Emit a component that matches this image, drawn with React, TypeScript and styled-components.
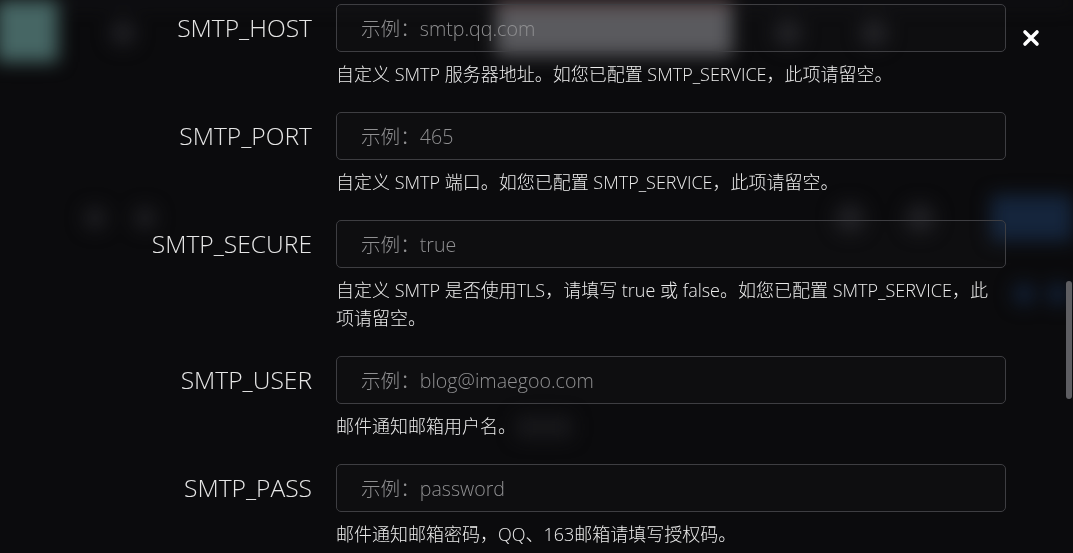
import styled, { createGlobalStyle } from "styled-components";

const GlobalStyle = createGlobalStyle`
  html, body {
    margin: 0;
    padding: 0;
    background: #0b0b0d;
    overflow: hidden;
  }
  body {
    font-family: "Open Sans", "Noto Sans CJK SC", sans-serif;
  }
`;

type Field = {
  name: string;
  example: string;
  help: string;
};

const FIELDS: Field[] = [
  {
    name: "SMTP_HOST",
    example: "smtp.qq.com",
    help: "自定义 SMTP 服务器地址。如您已配置 SMTP_SERVICE，此项请留空。",
  },
  {
    name: "SMTP_PORT",
    example: "465",
    help: "自定义 SMTP 端口。如您已配置 SMTP_SERVICE，此项请留空。",
  },
  {
    name: "SMTP_SECURE",
    example: "true",
    help: "自定义 SMTP 是否使用TLS，请填写 true 或 false。如您已配置 SMTP_SERVICE，此项请留空。",
  },
  {
    name: "SMTP_USER",
    example: "blog@imaegoo.com",
    help: "邮件通知邮箱用户名。",
  },
  {
    name: "SMTP_PASS",
    example: "password",
    help: "邮件通知邮箱密码，QQ、163邮箱请填写授权码。",
  },
];

export default function App() {
  return (
    <>
      <GlobalStyle />
      <Behind>
        <TopBar>
          <LogoTile />
          <Blob $w={26} $ml={52} />
          <PaleButton />
          <Blob $w={28} $ml={42} />
          <Blob $w={28} $ml={58} />
        </TopBar>
        <ToolRow>
          <Blob $w={22} $ml={84} />
          <Blob $w={22} $ml={28} />
          <Spacer />
          <Blob $w={30} />
          <Blob $w={30} $ml={40} />
          <BlueButton />
        </ToolRow>
        <ListRow>
          <Spacer />
          <BlueDot />
          <BlueDot />
        </ListRow>
        <FooterRow>
          <FaintBar />
        </FooterRow>
      </Behind>

      <Overlay>
        <Form>
          {FIELDS.map((f) => (
            <Row key={f.name}>
              <Label>{f.name}</Label>
              <Input placeholder={`示例：${f.example}`} />
              <Help>{f.help}</Help>
            </Row>
          ))}
        </Form>
        <CloseButton aria-label="关闭">
          <svg width="18" height="18" viewBox="0 0 18 18">
            <path d="M3 3 L15 15 M15 3 L3 15" stroke="#fff" strokeWidth="3.6" strokeLinecap="round" />
          </svg>
        </CloseButton>
        <ScrollThumb />
      </Overlay>
    </>
  );
}

/* blurred page behind the dialog */

const Behind = styled.div`
  height: 553px;
  display: flex;
  flex-direction: column;
  filter: blur(9px);
  border-top: 5px solid #17171c;
`;

const TopBar = styled.div`
  height: 56px;
  display: flex;
  align-items: center;
`;

const LogoTile = styled.div`
  width: 62px;
  height: 62px;
  margin-left: -4px;
  margin-top: -4px;
  background: #466664;
`;

const Blob = styled.div<{ $w: number; $ml?: number }>`
  width: ${(p) => p.$w}px;
  height: ${(p) => p.$w}px;
  margin-left: ${(p) => p.$ml ?? 0}px;
  border-radius: 50%;
  background: #1f1f23;
  flex-shrink: 0;
`;

const PaleButton = styled.div`
  width: 236px;
  height: 50px;
  margin-left: 360px;
  margin-top: -10px;
  background: #58585c;
  border-top: 5px solid #6a4646;
`;

const Spacer = styled.div`
  flex: 1;
`;

const ToolRow = styled.div`
  margin-top: 134px;
  height: 46px;
  display: flex;
  align-items: center;
`;

const BlueButton = styled.div`
  width: 82px;
  height: 46px;
  margin-left: 56px;
  background: #15253c;
  border-radius: 4px;
`;

const ListRow = styled.div`
  margin-top: 38px;
  height: 30px;
  display: flex;
  align-items: center;
  gap: 12px;
  padding-right: 4px;
`;

const BlueDot = styled.div`
  width: 22px;
  height: 22px;
  border-radius: 50%;
  background: #122036;
`;

const FooterRow = styled.div`
  margin-top: 98px;
  height: 40px;
  display: flex;
  align-items: center;
`;

const FaintBar = styled.div`
  width: 56px;
  height: 22px;
  margin-left: 516px;
  border-radius: 4px;
  background: #18181b;
`;

/* dialog */

const Overlay = styled.div`
  position: fixed;
  inset: 0;
  padding-top: 4px;
`;

const Form = styled.div`
  display: flex;
  flex-direction: column;
  gap: 24px;
`;

const Row = styled.div`
  display: grid;
  grid-template-columns: 312px 670px;
  column-gap: 24px;
  row-gap: 8px;
`;

const Label = styled.label`
  height: 47px;
  display: flex;
  align-items: center;
  justify-content: flex-end;
  font-size: 24.6px;
  font-weight: 300;
  color: #e6e6e6;
`;

const Input = styled.input`
  box-sizing: border-box;
  height: 48px;
  width: 100%;
  padding: 0 24px;
  border: 1px solid #3e3e42;
  border-radius: 5px;
  background: rgba(255, 255, 255, 0.015);
  font-family: "Open Sans", "Noto Sans CJK SC", sans-serif;
  font-size: 19.6px;
  font-weight: 300;
  color: #e6e6e6;
  outline: none;

  &::placeholder {
    color: #909092;
  }
`;

const Help = styled.div`
  grid-column: 2;
  max-width: 662px;
  font-size: 18px;
  font-weight: 300;
  line-height: 28px;
  color: #ececec;
`;

const CloseButton = styled.button`
  position: absolute;
  top: 29px;
  right: 33px;
  width: 18px;
  height: 18px;
  padding: 0;
  border: none;
  background: none;
  display: flex;
  cursor: pointer;
`;

const ScrollThumb = styled.div`
  position: absolute;
  right: 1px;
  top: 281px;
  width: 6px;
  height: 118px;
  border-radius: 3px;
  background: #5e5e62;
`;
